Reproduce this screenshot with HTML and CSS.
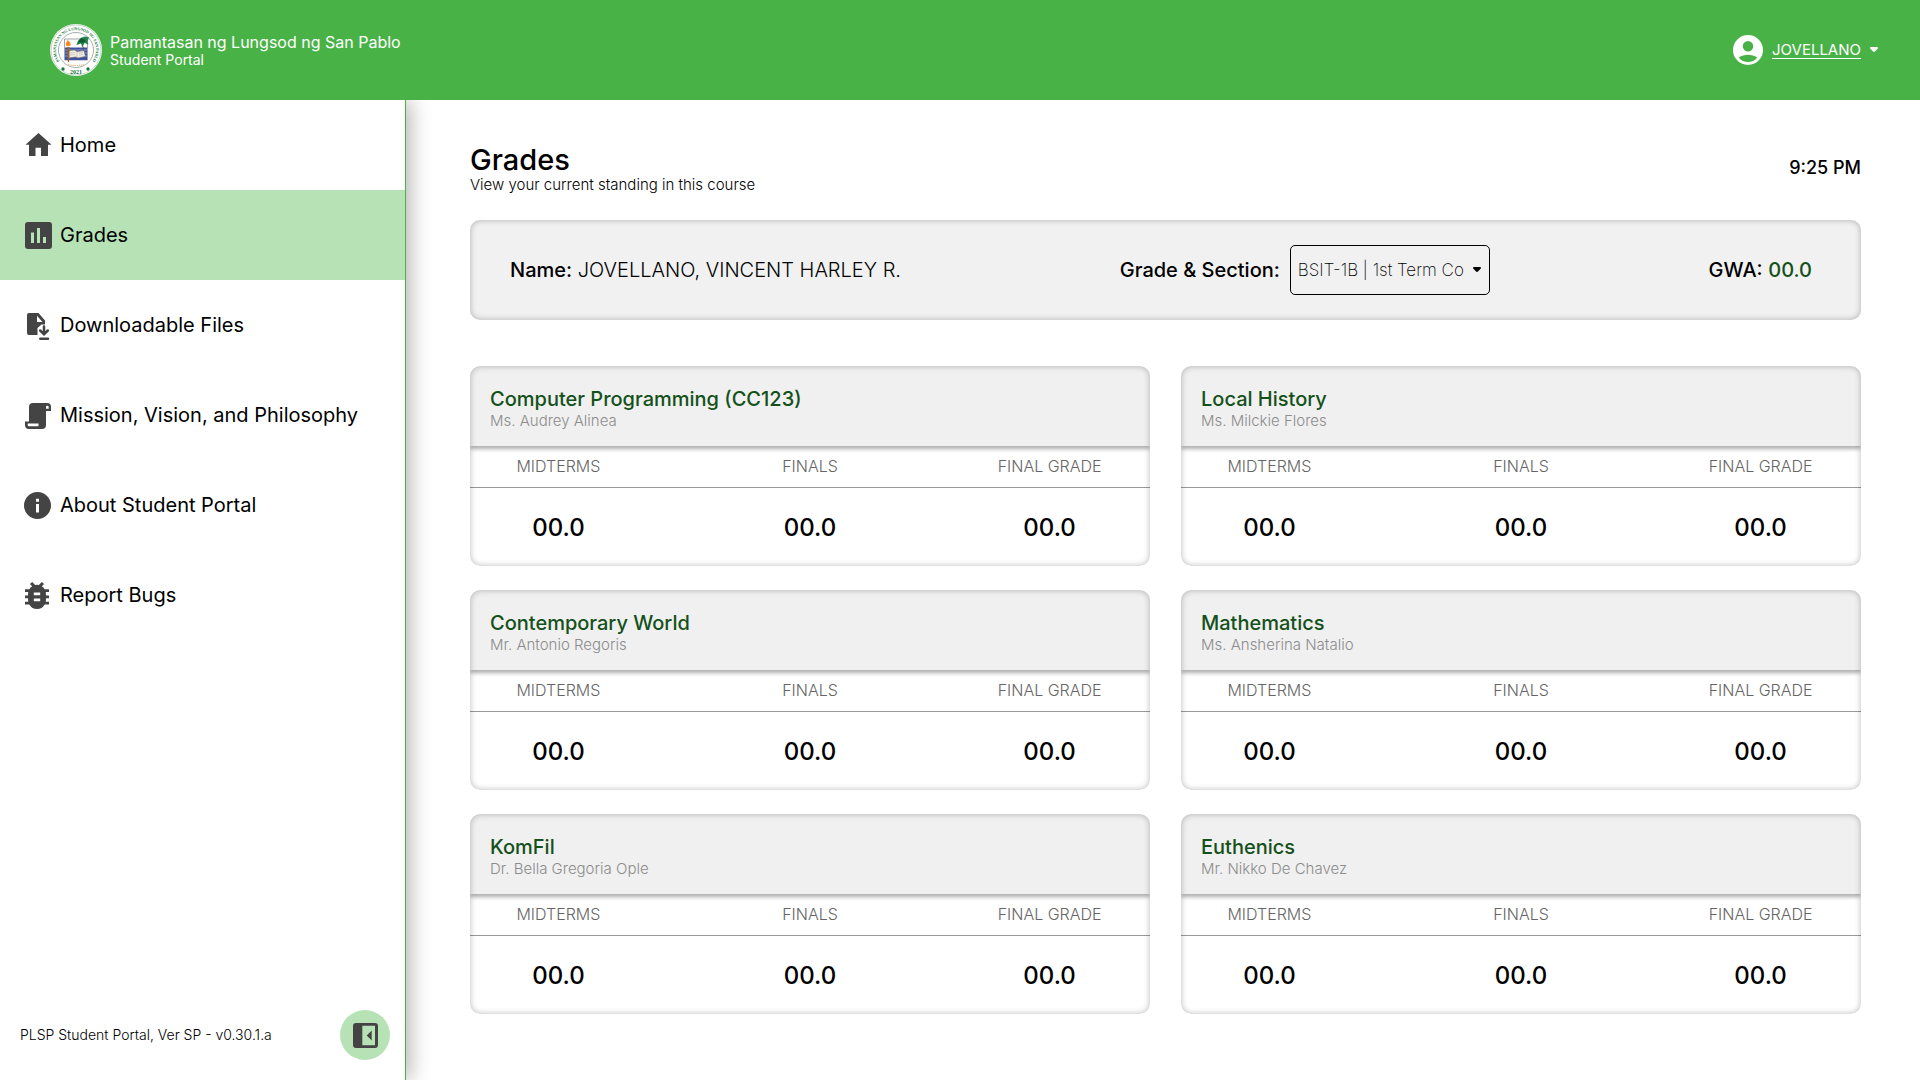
FILE: index.html
```html
<!DOCTYPE html>
<html lang="en">
<head>
<meta charset="utf-8">
<meta name="viewport" content="width=device-width, initial-scale=1">
<title>Grades - Student Portal</title>
<link rel="stylesheet" href="styles.css">
</head>
<body>
<header class="topbar">
  <div class="brand">
    <svg class="seal" viewBox="0 0 52 52" role="img" aria-label="University seal">
      <defs><path id="ring" d="M11.900 40.100A20 20 0 1 1 40.100 40.100"/></defs>
      <circle cx="26" cy="26" r="26" fill="#fff"/>
      <circle cx="26" cy="26" r="25" fill="none" stroke="#9db8a6" stroke-width=".6"/>
      <circle cx="26" cy="26" r="17.500" fill="none" stroke="#8d9a94" stroke-width=".8"/>
      <text class="seal-text"><textPath href="#ring" startOffset="50%" text-anchor="middle">PAMANTASAN NG LUNGSOD NG SAN PABLO</textPath></text>
      <path d="M14.500 15h23v21h-23z" fill="#fff" stroke="#667" stroke-width=".6"/>
      <path d="M15 23.500h22V36H15z" fill="#3c50a4"/>
      <path d="M15 26h22M15 29h22M15 32h22" stroke="#a9b5df" stroke-width=".7"/>
      <path d="M32 21c2 3 2 6 0 9" fill="none" stroke="#6b5134" stroke-width="1"/>
      <path d="M26.500 21c1-5 5-8.500 9-8.500l3.500 1-1.500 4 1 3-4-1.500-2 4-1.500-3.500z" fill="#21874b"/>
      <path d="M28 18l3-4 5 2-3 3z" fill="#155c36"/>
      <path d="M18.500 26.500l6-.5 2.500 1.500 7-1 1.500 6-7.500 1.500-2.500-1-6.500 1z" fill="#f2eee6" stroke="#716b66" stroke-width=".7"/>
      <path d="M27 27.500v6M20 29l5-.5M20 31l5-.5M29 29l4-.5M29 31l4-.5" stroke="#aaa49d" stroke-width=".5"/>
      <path d="M17.300 23h2.400l-.6 15h-1.200z" fill="#9c6427"/>
      <path d="M16.300 22c-1.500-3 1-4 1.200-6 2 1.500 4.500 3.500 2.500 6z" fill="#f58a20"/>
      <path d="M18 40.500q8 2 16 0" fill="none" stroke="#e8c18b" stroke-width="1.200" stroke-dasharray="1.500 .7"/>
      <circle cx="13" cy="45" r="1.700" fill="#197642"/>
      <circle cx="38" cy="45" r="1.700" fill="#197642"/>
      <text class="seal-year" x="26" y="50" text-anchor="middle">2021</text>
    </svg>
    <div>
      <p class="brand-name">Pamantasan ng Lungsod ng San Pablo</p>
      <p class="brand-sub">Student Portal</p>
    </div>
  </div>
  <button class="account" type="button" aria-haspopup="menu">
    <svg class="avatar" viewBox="2 2 20 20" aria-hidden="true"><path fill="currentColor" fill-rule="evenodd" d="M12 2a10 10 0 1 0 0 20 10 10 0 0 0 0-20zm0 4a3.500 3.500 0 1 1 0 7 3.500 3.500 0 0 1 0-7zm0 14a7.900 7.900 0 0 1-6.100-2.900C7.400 15.800 10 15.200 12 15.200s4.600.6 6.100 1.900A7.900 7.900 0 0 1 12 20z"/></svg>
    <span class="account-name">JOVELLANO</span>
    <svg class="caret" viewBox="0 0 8 6" aria-hidden="true"><path fill="currentColor" d="M1 0h6q1.500.3.700 1.500L5 4.600q-1 .9-2 0L.3 1.500Q-.5.300 1 0z"/></svg>
  </button>
</header>

<div class="layout">
  <aside class="sidebar">
    <nav aria-label="Main">
      <a class="nav-item" href="#home">
        <svg class="icon" viewBox="0 0 36 36" aria-hidden="true"><path d="M18.500 6 31.500 17.800H28V29h-7v-8.300h-5.500V29H9V17.800H5.500z"/></svg>
        Home</a>
      <a class="nav-item is-active" href="#grades" aria-current="page">
        <svg class="icon" viewBox="0 0 36 36" aria-hidden="true"><path fill-rule="evenodd" d="M8 5h21a3 3 0 0 1 3 3v21a3 3 0 0 1-3 3H8a3 3 0 0 1-3-3V8a3 3 0 0 1 3-3zm3 10.500V26h3V15.500zM17 11v15h3V11zm6 9v6h3v-6z"/></svg>
        Grades</a>
      <a class="nav-item" href="#files">
        <svg class="icon" viewBox="0 0 36 36" aria-hidden="true"><path fill-rule="evenodd" d="M9 6h9.500l6.500 7.500v4h-3.500L17.500 21v7H9a2 2 0 0 1-2-2V8a2 2 0 0 1 2-2zm8 2.800V15h5.500z"/><path class="line" d="M24 19.500V27m-3.800-3.500L24 27.300l3.800-3.800M20.300 31.700h7.700"/></svg>
        Downloadable Files</a>
      <a class="nav-item" href="#mission">
        <svg class="icon" viewBox="0 0 36 36" aria-hidden="true"><path fill-rule="evenodd" d="M13 6h14a4 4 0 0 1 4 4v4h-5v14a4 4 0 0 1-4 4H9a4 4 0 0 1-4-4v-3.500h4V10a4 4 0 0 1 4-4zm13 5.700h2.700V10a1.300 1.300 0 0 0-2.700 0zM7.700 26.500V28q0 1.200 1.300 1.200h9.500v-2.700z"/></svg>
        Mission, Vision, and Philosophy</a>
      <a class="nav-item" href="#about">
        <svg class="icon" viewBox="0 0 36 36" aria-hidden="true"><path fill-rule="evenodd" d="M17.500 5a13.500 13.500 0 1 0 0 27 13.500 13.500 0 0 0 0-27zM16 11.700h3v3h-3zm0 5.300h3v8.500h-3z"/></svg>
        About Student Portal</a>
      <a class="nav-item" href="#bugs">
        <svg class="icon" viewBox="0 0 36 36" aria-hidden="true"><path fill-rule="evenodd" d="M12.200 5 9.900 6.900 12.200 9.200A9 9 0 0 0 9.300 12.300H5v2.700h3.200l-.2 3.500H5v2.800h3l.2 3.500H5v2.700h4.300a8.800 8.800 0 0 0 15.400 0H29v-2.700h-3.200l.2-3.500h3v-2.800h-3l-.2-3.500H29v-2.700h-4.300a9 9 0 0 0-2.900-3.100l2.300-2.300L21.800 5 18.900 8q-1.900-.4-3.800 0zM13.800 15.500h6.400v2.700h-6.400zm0 6h6.400v2.700h-6.400z"/></svg>
        Report Bugs</a>
    </nav>
    <div class="sidebar-foot">
      <p class="version">PLSP Student Portal, Ver SP - v0.30.1.a</p>
      <button class="collapse" type="button" aria-label="Collapse sidebar">
        <svg viewBox="0 0 50 50" aria-hidden="true"><path fill-rule="evenodd" d="M16 13h19a3 3 0 0 1 3 3v19a3 3 0 0 1-3 3H16a3 3 0 0 1-3-3V16a3 3 0 0 1 3-3zm6.300 2.800v19.500H35V15.800zM31.700 20.500v10l-5-5z"/></svg>
      </button>
    </div>
  </aside>

  <main class="content">
    <div class="page-head">
      <div>
        <h1>Grades</h1>
        <p class="lead">View your current standing in this course</p>
      </div>
      <time class="clock" datetime="21:25">9:25 PM</time>
    </div>

    <section class="summary" aria-label="Student summary">
      <p><strong>Name:</strong> <span class="student">JOVELLANO, VINCENT HARLEY R.</span></p>
      <div class="section-pick">
        <label for="section">Grade &amp; Section:</label>
        <div class="select-wrap">
          <select id="section"><option>BSIT-1B | 1st Term Co</option></select>
          <svg class="select-caret" viewBox="0 0 8 6" aria-hidden="true"><path d="M1 0h6q1.500.3.700 1.500L5 4.600q-1 .9-2 0L.3 1.500Q-.5.300 1 0z"/></svg>
        </div>
      </div>
      <p><strong>GWA:</strong> <strong class="gwa">00.0</strong></p>
    </section>

    <div class="cards">
      <article class="card">
        <header class="card-head"><h2>Computer Programming (CC123)</h2><p>Ms. Audrey Alinea</p></header>
        <table><thead><tr><th scope="col">MIDTERMS</th><th scope="col">FINALS</th><th scope="col">FINAL GRADE</th></tr></thead>
        <tbody><tr><td>00.0</td><td>00.0</td><td>00.0</td></tr></tbody></table>
      </article>
      <article class="card">
        <header class="card-head"><h2>Local History</h2><p>Ms. Milckie Flores</p></header>
        <table><thead><tr><th scope="col">MIDTERMS</th><th scope="col">FINALS</th><th scope="col">FINAL GRADE</th></tr></thead>
        <tbody><tr><td>00.0</td><td>00.0</td><td>00.0</td></tr></tbody></table>
      </article>
      <article class="card">
        <header class="card-head"><h2>Contemporary World</h2><p>Mr. Antonio Regoris</p></header>
        <table><thead><tr><th scope="col">MIDTERMS</th><th scope="col">FINALS</th><th scope="col">FINAL GRADE</th></tr></thead>
        <tbody><tr><td>00.0</td><td>00.0</td><td>00.0</td></tr></tbody></table>
      </article>
      <article class="card">
        <header class="card-head"><h2>Mathematics</h2><p>Ms. Ansherina Natalio</p></header>
        <table><thead><tr><th scope="col">MIDTERMS</th><th scope="col">FINALS</th><th scope="col">FINAL GRADE</th></tr></thead>
        <tbody><tr><td>00.0</td><td>00.0</td><td>00.0</td></tr></tbody></table>
      </article>
      <article class="card">
        <header class="card-head"><h2>KomFil</h2><p>Dr. Bella Gregoria Ople</p></header>
        <table><thead><tr><th scope="col">MIDTERMS</th><th scope="col">FINALS</th><th scope="col">FINAL GRADE</th></tr></thead>
        <tbody><tr><td>00.0</td><td>00.0</td><td>00.0</td></tr></tbody></table>
      </article>
      <article class="card">
        <header class="card-head"><h2>Euthenics</h2><p>Mr. Nikko De Chavez</p></header>
        <table><thead><tr><th scope="col">MIDTERMS</th><th scope="col">FINALS</th><th scope="col">FINAL GRADE</th></tr></thead>
        <tbody><tr><td>00.0</td><td>00.0</td><td>00.0</td></tr></tbody></table>
      </article>
    </div>
  </main>
</div>
</body>
</html>
```
FILE: styles.css
```css
:root {
  --green: #49b247;
  --green-soft: #b6e2b6;
  --green-dark: #14501a;
  --panel: #f1f1f1;
  --icon: #444;
}

* { box-sizing: border-box; }

body {
  margin: 0;
  min-height: 100vh;
  display: flex;
  flex-direction: column;
  background: #fff;
  color: #000;
  font-family: "Inter", "Liberation Sans", sans-serif;
  font-size: 20px;
  line-height: 24px;
}

p, h1, h2 { margin: 0; }
button, select { font: inherit; color: inherit; }
strong { font-weight: 500; }

/* Top bar */
.topbar {
  position: relative;
  z-index: 1;
  display: flex;
  align-items: center;
  justify-content: space-between;
  height: 100px;
  padding: 0 42px 0 50px;
  background: var(--green);
  color: #fff;
}
.brand { display: flex; align-items: center; gap: 8px; }
.seal { width: 52px; height: 52px; display: block; overflow: visible; }
.seal-text { font: 700 4px "Liberation Serif", serif; fill: #197642; }
.seal-year { font: 700 6px "Liberation Serif", serif; fill: #197642; }
.brand-name { font-size: 16px; line-height: 20px; }
.brand-sub { font-size: 14px; line-height: 16px; }

.account {
  display: flex;
  align-items: center;
  gap: 9px;
  padding: 0;
  border: 0;
  background: none;
  cursor: pointer;
}
.avatar { width: 30px; height: 30px; }
.account-name {
  font-size: 15px;
  line-height: 16px;
  border-bottom: 1px solid #fff;
}
.caret { width: 8px; height: 6px; }

/* Sidebar */
.layout { flex: 1; display: flex; }
.sidebar {
  flex: none;
  width: 406px;
  display: flex;
  flex-direction: column;
  justify-content: space-between;
  border-right: 1px solid var(--green);
  box-shadow: 4px 0 20px rgba(0, 0, 0, 0.3);
  background: #fff;
}
.nav-item {
  display: flex;
  align-items: center;
  gap: 4px;
  height: 90px;
  padding-left: 20px;
  color: #000;
  text-decoration: none;
}
.nav-item.is-active { background: var(--green-soft); }
.icon { width: 36px; height: 36px; fill: var(--icon); }
.icon .line { fill: none; stroke: var(--icon); stroke-width: 2.5; stroke-linecap: round; }
.sidebar-foot {
  display: flex;
  align-items: center;
  justify-content: space-between;
  padding: 20px 15px 20px 20px;
}
.version { font-size: 14px; line-height: 16px; font-weight: 300; }
.collapse {
  width: 50px;
  height: 50px;
  padding: 0;
  border: 0;
  border-radius: 50%;
  background: var(--green-soft);
  cursor: pointer;
}
.collapse svg { display: block; fill: var(--icon); }

/* Page content */
.content { flex: 1; min-width: 0; padding: 43px 59px 40px 64px; }
.page-head {
  display: flex;
  align-items: center;
  justify-content: space-between;
  margin-bottom: 27px;
}
h1 { font-size: 29px; line-height: 34px; font-weight: 500; }
.lead { font-size: 15px; line-height: 16px; font-weight: 300; }
.clock { font-size: 18px; font-weight: 500; }

.summary {
  display: flex;
  align-items: center;
  justify-content: space-between;
  min-height: 100px;
  padding: 0 49px 0 40px;
  margin-bottom: 46px;
  border-radius: 10px;
  background: var(--panel);
  box-shadow: inset 0 0 6px rgba(0, 0, 0, 0.28);
}
.student { font-weight: 300; }
.gwa { color: var(--green-dark); }
.section-pick { display: flex; align-items: center; gap: 10px; }
.section-pick label { font-weight: 500; }
.select-wrap { position: relative; }
.select-wrap select {
  display: block;
  appearance: none;
  width: 200px;
  height: 50px;
  padding: 0 16px 0 7px;
  border: 1px solid #000;
  border-radius: 5px;
  background: transparent;
  font-size: 17px;
  font-weight: 200;
}
.select-caret {
  position: absolute;
  right: 9px;
  top: 22px;
  width: 8px;
  height: 6px;
  pointer-events: none;
}

/* Subject cards */
.cards {
  display: grid;
  grid-template-columns: 1fr 1fr;
  gap: 24px 31px;
}
.card {
  position: relative;
  overflow: hidden;
  border-radius: 10px;
  background: #fff;
}
.card::after {
  content: "";
  position: absolute;
  inset: 0;
  border-radius: inherit;
  box-shadow: inset 0 0 6px rgba(0, 0, 0, 0.28);
  pointer-events: none;
}
.card-head {
  height: 80px;
  padding: 21px 20px 0;
  background: #f0f0f0;
  box-shadow: 0 3px 4px rgba(0, 0, 0, 0.32);
}
h2 { font-size: 20px; line-height: 24px; font-weight: 500; color: var(--green-dark); }
.card-head p { font-size: 15px; line-height: 20px; font-weight: 300; color: #8c8c8c; }

table { width: 100%; border-collapse: collapse; table-layout: fixed; }
th, td { padding: 0; text-align: center; }
th:first-child { width: 26%; }
th:nth-child(2) { width: 48%; }
th:last-child, td:last-child { padding-right: 24px; }
th {
  height: 41px;
  border-bottom: 1px solid #999;
  font-size: 16px;
  line-height: 20px;
  font-weight: 300;
  color: #666;
}
td { height: 79px; padding-top: 2px; font-size: 24px; font-weight: 500; }
```
